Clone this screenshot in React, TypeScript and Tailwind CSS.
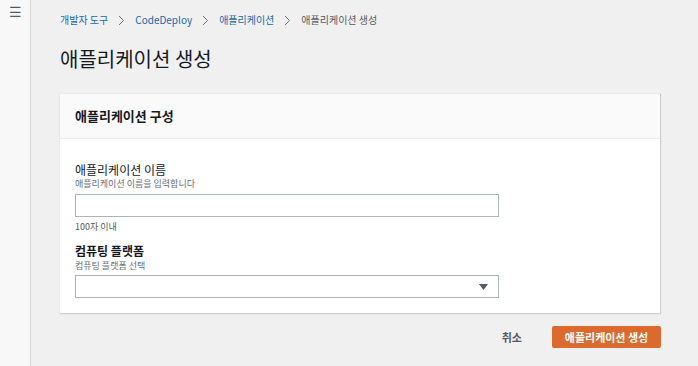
export default function App() {
  const font = { fontFamily: '"Noto Sans CJK KR", "Noto Sans", sans-serif' };
  return (
    <div className="flex h-[366px] w-[698px] overflow-hidden bg-[#f0f0f0] text-[#16191f]" style={font}>
      {/* Left rail */}
      <div className="flex w-[31px] shrink-0 justify-center border-r border-[#d5d5d5] bg-[#f8f8f8] pt-[4px]">
        <span className="text-[14px] leading-none text-[#545b64]">☰</span>
      </div>

      {/* Main */}
      <div className="flex-1 pl-[29px] pr-[38px]">
        <nav className="mt-[13px] flex items-center gap-[8px] text-[10px] leading-[14px]">
          <a className="text-[#1c68a8]">개발자 도구</a>
          <Chevron />
          <a className="text-[#1c68a8]">CodeDeploy</a>
          <Chevron />
          <a className="text-[#1c68a8]">애플리케이션</a>
          <Chevron />
          <span className="text-[#545b64]">애플리케이션 생성</span>
        </nav>

        <h1 className="mt-[19px] text-[20px] leading-[26px] font-normal">애플리케이션 생성</h1>

        <section className="mt-[22px] w-[601px] border-r border-b border-[#cfcfcf] bg-white shadow-[0_0_1px_rgba(0,0,0,0.15)]">
          <div className="flex h-[45px] items-center border-b border-[#eaeded] bg-[#fafafa] px-[15px]">
            <h2 className="text-[13px] font-bold">애플리케이션 구성</h2>
          </div>
          <div className="px-[15px] pt-[24px] pb-[15px]">
            <div className="text-[12px] leading-[14px] text-[#16191f]">애플리케이션 이름</div>
            <div className="mt-[1px] text-[9px] leading-[12px] text-[#687078]">애플리케이션 이름을 입력합니다</div>
            <div className="mt-[4px] h-[23px] w-[424px] border border-[#aab7b8] bg-white" />
            <div className="mt-[4px] text-[9px] leading-[12px] text-[#545b64]">100자 이내</div>

            <div className="mt-[11px] text-[12px] leading-[14px] font-semibold">컴퓨팅 플랫폼</div>
            <div className="mt-[2px] text-[9px] leading-[12px] text-[#687078]">컴퓨팅 플랫폼 선택</div>
            <div className="mt-[3px] flex h-[23px] w-[424px] items-center justify-end border border-[#aab7b8] bg-white pr-[10px]">
              <svg width="9" height="6" viewBox="0 0 9 6"><path d="M0 0h9L4.5 6z" fill="#545b64" /></svg>
            </div>
          </div>
        </section>

        <div className="mt-[12px] flex w-[601px] items-center justify-end">
          <button className="mr-[30px] text-[11px] font-bold text-[#545b64]">취소</button>
          <button className="h-[22px] w-[109px] rounded-[2px] bg-[#dc6a2c] text-[11px] font-bold text-white">
            애플리케이션 생성
          </button>
        </div>
      </div>
    </div>
  );
}

function Chevron() {
  return (
    <svg width="7" height="11" viewBox="0 0 7 11" className="mx-[2px]">
      <path d="M1 1l4.5 4.5L1 10" fill="none" stroke="#687078" strokeWidth="1" />
    </svg>
  );
}
